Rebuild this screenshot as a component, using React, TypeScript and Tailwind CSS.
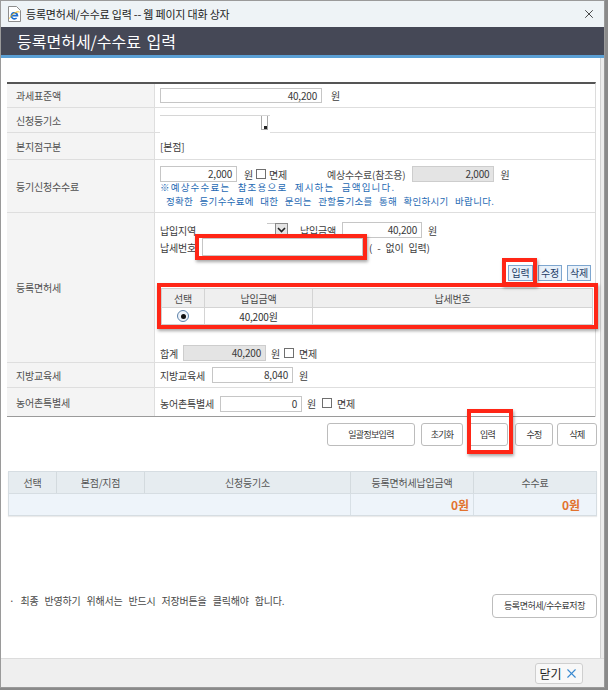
import { X } from "lucide-react";

function Field({
  w,
  h = "h-[16px]",
  value = "",
  gray = false,
}: {
  w: string;
  h?: string;
  value?: string;
  gray?: boolean;
}) {
  return (
    <div
      className={`${w} ${h} shrink-0 border ${
        gray ? "border-[#cdcdcd] bg-[#e4e4e4]" : "border-[#c6c6c6] bg-white"
      } flex items-center justify-end pr-[4px] text-[10px] leading-none text-[#3a3a3a]`}
    >
      {value}
    </div>
  );
}

function Check() {
  return <span className="inline-block w-[10px] h-[10px] shrink-0 border border-[#6f6f6f] bg-white" />;
}

function Row({
  h,
  label,
  children,
  bottom = "border-[#dedede]",
  cell = "items-center",
}: {
  h: string;
  label: string;
  children?: React.ReactNode;
  bottom?: string;
  cell?: string;
}) {
  return (
    <div className={`flex ${h} border-b ${bottom}`}>
      <div className="w-[148px] shrink-0 bg-[#f4f4f4] border-r border-[#dedede] flex items-center pl-[9px] text-[#505050]">
        {label}
      </div>
      <div className={`flex-1 min-w-0 flex pl-[5px] text-[#3c3c3c] ${cell}`}>{children}</div>
    </div>
  );
}

function SmallBtn({ label, w }: { label: string; w: string }) {
  return (
    <div
      className={`${w} h-[16px] border border-[#7ea6cf] bg-[#e8f1fa] text-[#1f3d66] flex items-center justify-center text-[10px] leading-none`}
    >
      {label}
    </div>
  );
}

function Btn({ label, w, ml }: { label: string; w: string; ml: string }) {
  return (
    <div
      className={`${w} ${ml} h-[23px] rounded-[3px] border border-[#bcbcbc] bg-white flex items-center justify-center text-[9px] tracking-[-0.7px] text-[#333]`}
    >
      {label}
    </div>
  );
}

function RedBox({ pos }: { pos: string }) {
  return (
    <div
      className={`absolute ${pos} border-[4px] border-[#ff2616] shadow-[1px_2px_3px_rgba(0,0,0,0.35)] pointer-events-none`}
    />
  );
}

export default function App() {
  return (
    <div className="w-[608px] h-[690px] bg-[#8a8a8a] font-['Noto_Sans_CJK_KR','Noto_Sans',sans-serif] text-[10px] tracking-[-0.2px] [word-spacing:3px] overflow-hidden">
      <div className="relative w-[605px] h-[688px] border border-[#9a9a9a] bg-white flex flex-col">
        {/* window title */}
        <div className="h-[26px] shrink-0 bg-[#eef3f6] flex items-center pl-[7px] pr-[8px]">
          <svg width="13" height="16" viewBox="0 0 13 16">
            <path d="M0.5 0.5h8l4 4v11h-12z" fill="#fff" stroke="#8d8d8d" />
            <path d="M3.3 9.6h6.2a3.1 3.1 0 1 0 -0.9 2.4" fill="none" stroke="#1f6fd1" strokeWidth="1.6" />
            <path d="M1.5 12.5c3-5 7-7.5 10-6.5" fill="none" stroke="#f1b417" strokeWidth="1" />
          </svg>
          <span className="ml-[5px] text-[11px] text-[#1d1d1d] tracking-[-0.2px] [word-spacing:0px]">
            등록면허세/수수료 입력 -- 웹 페이지 대화 상자
          </span>
          <X className="ml-auto text-[#222]" size={14} strokeWidth={1.4} />
        </div>
        {/* header */}
        <div className="h-[28px] shrink-0 bg-[#454856] flex items-center pl-[16px] text-[16px] text-white tracking-[0px] [word-spacing:2px]">
          등록면허세/수수료 입력
        </div>
        <div className="h-[3px] shrink-0 bg-[#5a9fd4]" />

        {/* content */}
        <div className="flex-1 min-h-0 flex">
          <div className="w-[599px] shrink-0 flex flex-col pt-[24px]">
            {/* main table */}
            <div className="ml-[6px] w-[589px] border-t-2 border-[#555] border-r border-r-[#dcdcdc]">
              <Row h="h-[24px]" label="과세표준액">
                <Field w="w-[162px]" h="h-[15px]" value="40,200" />
                <span className="ml-[9px]">원</span>
              </Row>
              <Row h="h-[25px]" label="신청등기소" cell="items-start pt-[7px]">
                <div className="relative z-10 w-[110px] h-[21px] bg-white border-t border-[#d6d6d6] flex justify-end pr-[2px]">
                  <div className="w-[7px] h-[14px] border-x border-b border-[#a9a9a9] flex items-end justify-end">
                    <span className="w-[3px] h-[3px] bg-[#222]" />
                  </div>
                </div>
              </Row>
              <Row h="h-[27px]" label="본지점구분">
                <span>[본점]</span>
              </Row>
              <Row h="h-[53px]" label="등기신청수수료" cell="flex-col items-start pt-[6px]">
                <div className="flex items-center h-[16px]">
                  <Field w="w-[77px]" value="2,000" />
                  <span className="ml-[7px]">원</span>
                  <span className="ml-[3px]">
                    <Check />
                  </span>
                  <span className="ml-[3px]">면제</span>
                  <span className="ml-[40px] text-[#4a4a4a]">예상수수료(참조용)</span>
                  <span className="ml-[7px]">
                    <Field w="w-[82px]" value="2,000" gray />
                  </span>
                  <span className="ml-[6px]">원</span>
                </div>
                <div className="mt-[-1px] text-[9.5px] leading-[13.5px] text-[#2569b3] tracking-[0.3px] [word-spacing:4px]">
                  <div className="tracking-[1.2px]">※예상수수료는 참조용으로 제시하는 금액입니다.</div>
                  <div className="pl-[6px]">정확한 등기수수료에 대한 문의는 관할등기소를 통해 확인하시기 바랍니다.</div>
                </div>
              </Row>
              <Row h="h-[150px]" label="등록면허세" cell="flex-col items-stretch pt-[9px]">
                <div className="flex items-center h-[16px]">
                  <span className="w-[107px] shrink-0">납입지역</span>
                  <span className="w-[8px] h-[14px] border-t border-[#c8c8c8]" />
                  <span className="w-[13px] h-[14px] border border-[#8a8a8a] bg-[#e4e4e4] flex items-center justify-center">
                    <svg width="9" height="6" viewBox="0 0 9 6">
                      <path d="M1 1l3.5 3.5L8 1" fill="none" stroke="#222" strokeWidth="1.6" />
                    </svg>
                  </span>
                  <span className="ml-[12px] w-[42px] shrink-0">납입금액</span>
                  <Field w="w-[80px]" value="40,200" />
                  <span className="ml-[6px]">원</span>
                </div>
                <div className="flex items-center h-[18px]">
                  <span className="w-[42px] shrink-0">납세번호</span>
                  <Field w="w-[161px]" h="h-[18px]" />
                  <span className="ml-[6px]">( - 없이 입력)</span>
                </div>
                <div className="mt-[9px] flex justify-end gap-[5px] pr-[4px]">
                  <SmallBtn label="입력" w="w-[25px]" />
                  <SmallBtn label="수정" w="w-[24px]" />
                  <SmallBtn label="삭제" w="w-[24px]" />
                </div>
                <div className="mt-[7px] ml-[1px] w-[432px] border border-[#cfcfcf] text-[#4a4a4a]">
                  <div className="flex h-[19px] bg-[#efefef] border-b border-[#d4d4d4]">
                    <div className="w-[43px] border-r border-[#d4d4d4] flex items-center justify-center">선택</div>
                    <div className="w-[108px] border-r border-[#d4d4d4] flex items-center justify-center">납입금액</div>
                    <div className="flex-1 flex items-center justify-center">납세번호</div>
                  </div>
                  <div className="flex h-[16px]">
                    <div className="w-[43px] border-r border-[#d4d4d4] flex items-center justify-center">
                      <span className="w-[12px] h-[12px] rounded-full border border-[#5d82aa] bg-[#eef4fb] flex items-center justify-center">
                        <span className="w-[5px] h-[5px] rounded-full bg-[#111]" />
                      </span>
                    </div>
                    <div className="w-[108px] border-r border-[#d4d4d4] flex items-center justify-center text-[#333]">
                      40,200원
                    </div>
                    <div className="flex-1" />
                  </div>
                </div>
                <div className="mt-[20px] flex items-center h-[16px]">
                  <span className="w-[23px] shrink-0">합계</span>
                  <Field w="w-[83px]" value="40,200" gray />
                  <span className="ml-[5px]">원</span>
                  <span className="ml-[4px]">
                    <Check />
                  </span>
                  <span className="ml-[5px]">면제</span>
                </div>
              </Row>
              <Row h="h-[25px]" label="지방교육세">
                <span className="w-[52px] shrink-0">지방교육세</span>
                <Field w="w-[81px]" value="8,040" />
                <span className="ml-[6px]">원</span>
              </Row>
              <Row h="h-[29px]" label="농어촌특별세" bottom="border-[#9a9a9a]" cell="items-center pt-[3px]">
                <span className="w-[60px] shrink-0">농어촌특별세</span>
                <Field w="w-[82px]" value="0" />
                <span className="ml-[5px]">원</span>
                <span className="ml-[6px]">
                  <Check />
                </span>
                <span className="ml-[5px]">면제</span>
              </Row>
            </div>

            {/* action buttons */}
            <div className="mt-[6px] flex justify-end pr-[3px]">
              <Btn label="일괄정보입력" w="w-[88px]" ml="ml-0" />
              <Btn label="초기화" w="w-[42px]" ml="ml-[6px]" />
              <Btn label="입력" w="w-[41px]" ml="ml-[4px]" />
              <Btn label="수정" w="w-[38px]" ml="ml-[7px]" />
              <Btn label="삭제" w="w-[40px]" ml="ml-[4px]" />
            </div>

            {/* summary table */}
            <div className="mt-[25px] ml-[7px] w-[589px] border border-[#d6dde2] shadow-[0_1px_1px_rgba(0,0,0,0.08)] text-[#555]">
              <div className="flex h-[22px] bg-[#e6ecf0] border-b border-[#d6dde2]">
                <div className="w-[48px] border-r border-[#d3dade] flex items-center justify-center">선택</div>
                <div className="w-[88px] border-r border-[#d3dade] flex items-center justify-center">본점/지점</div>
                <div className="w-[206px] border-r border-[#d3dade] flex items-center justify-center">신청등기소</div>
                <div className="w-[123px] border-r border-[#d3dade] flex items-center justify-center">등록면허세납입금액</div>
                <div className="flex-1 flex items-center justify-center">수수료</div>
              </div>
              <div className="flex h-[21px] bg-[#eef4fa] text-[12px] font-bold text-[#e2722e] tracking-[0px]">
                <div className="w-[342px] border-r border-[#d8e0e6]" />
                <div className="w-[123px] border-r border-[#d8e0e6] flex items-center justify-end pr-[4px]">0원</div>
                <div className="flex-1 flex items-center justify-end pr-[16px]">0원</div>
              </div>
            </div>

            {/* note + save */}
            <div className="mt-[78px] flex items-start pr-[3px]">
              <span className="ml-[8px] mt-[-1px] text-[#4a4a4a] [word-spacing:4px]">
                · 최종 반영하기 위해서는 반드시 저장버튼을 클릭해야 합니다.
              </span>
              <div className="ml-auto w-[105px] h-[24px] rounded-[4px] border border-[#bdbdbd] bg-white flex items-center justify-center text-[9px] tracking-[-0.5px] text-[#333]">
                등록면허세/수수료저장
              </div>
            </div>
          </div>
          <div className="flex-1 bg-[#ececec] border-l border-[#d2d2d2]" />
        </div>

        {/* footer */}
        <div className="h-[29px] shrink-0 bg-[#efefef] border-t border-[#dcdcdc] flex justify-end items-start pt-[4px] pr-[21px]">
          <div className="w-[48px] h-[21px] rounded-[3px] border border-[#cfcfcf] bg-[#f8f8f8] flex items-center justify-center gap-[2px] text-[12px] tracking-[0px] text-[#222]">
            닫기
            <X size={15} strokeWidth={1.8} className="text-[#3a8ad0]" />
          </div>
        </div>

        {/* annotations */}
        <RedBox pos="left-[194px] top-[233px] w-[172px] h-[26px]" />
        <RedBox pos="left-[501px] top-[257px] w-[35px] h-[28px]" />
        <RedBox pos="left-[156px] top-[282px] w-[441px] h-[46px]" />
        <RedBox pos="left-[466px] top-[408px] w-[46px] h-[45px]" />
      </div>
    </div>
  );
}
